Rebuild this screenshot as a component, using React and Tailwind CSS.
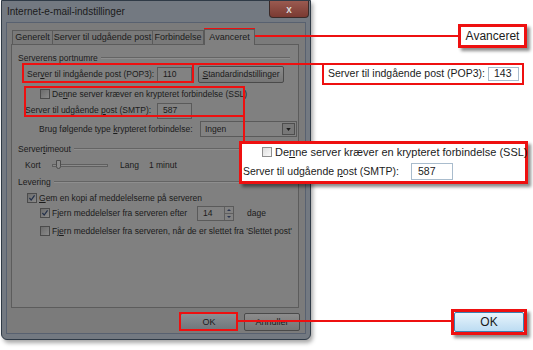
import React from 'react';

// dimmed dialog colours
const face = 'bg-[#7b7b7b]';

function Check({ checked, light }) {
  return (
    <span
      className={`relative inline-flex w-[10px] h-[10px] shrink-0 border ${
        light ? 'border-[#8f8f8f] bg-gradient-to-br from-[#dedede] to-[#fafafa]' : 'border-[#4b4b4b] bg-gradient-to-br from-[#6c6c6c] to-[#8a8a8a]'
      }`}
    >
      {checked && (
        <svg viewBox="0 0 10 10" className="absolute inset-0 w-full h-full">
          <path d="M1.8 5 L4 7.6 L8.2 1.8" fill="none" stroke="#23304a" strokeWidth="1.5" />
        </svg>
      )}
    </span>
  );
}

function Field({ value, className = '' }) {
  return (
    <div className={`flex items-center shrink-0 h-[16px] pl-[5px] border border-[#5a5a5a] bg-[#828282] ${className}`}>{value}</div>
  );
}

function GroupLabel({ children }) {
  return (
    <div className="flex items-center h-[14px] pl-[6px] pr-[8px] gap-[3px]">
      <span>{children}</span>
      <span className="flex-1 h-[2px] border-t border-[#646464] border-b border-b-[#8e8e8e]" />
    </div>
  );
}

export default function App() {
  return (
    <div className="relative w-[533px] h-[350px] overflow-hidden whitespace-nowrap bg-white font-['Liberation_Sans',Arial,sans-serif] text-[#1b1b1b]">
      {/* Dimmed dialog */}
      <div className="ml-[1px] w-[310px] h-[340px] flex flex-col bg-[#737981] border border-[#2f3a46] rounded-b-[6px] shadow-[2px_3px_4px_rgba(0,0,0,0.35)]">
        <div className="flex h-[21px] shrink-0">
          <span className="pl-[5px] pt-[5px] text-[10px] leading-[12px]">Internet-e-mail-indstillinger</span>
          <div className="ml-auto mr-[1px] w-[40px] h-[17px] flex items-center justify-center rounded-b-[4px] border border-t-0 border-[#3a2a28] bg-gradient-to-b from-[#9a5a50] to-[#7a3a32] text-[#d8d8d8] text-[10px] font-bold">
            x
          </div>
        </div>

        <div className={`mx-[4px] mb-[5px] flex-1 flex flex-col border border-[#586170] ${face} text-[8.5px] leading-[11px]`}>
          {/* Tabs */}
          <div className="flex items-end pl-[5px] pt-[5px] h-[21px] shrink-0 text-[9px]">
            <div className="w-[41px] h-[14px] flex items-center justify-center border border-b-0 border-[#5a5a5a] bg-[#797979]">Generelt</div>
            <div className="w-[100px] h-[14px] flex items-center justify-center border border-b-0 border-l-0 border-[#5a5a5a] bg-[#797979]">Server til udgående post</div>
            <div className="w-[51px] h-[14px] flex items-center justify-center border border-b-0 border-l-0 border-[#5a5a5a] bg-[#797979]">Forbindelse</div>
            <div className="w-[51px] h-[16px] flex items-center justify-center border border-b-0 border-[#5a5a5a] bg-[#808080] relative z-10 -mb-px">Avanceret</div>
          </div>

          {/* Panel */}
          <div className="ml-[4px] w-[288px] h-[264px] shrink-0 border border-[#5c5c5c] bg-[#808080] flex flex-col pt-[6px]">
            <GroupLabel>Serverens portnumre</GroupLabel>

            <div className="flex items-center h-[19px] pl-[15px]">
              <span className="w-[130px] shrink-0">Ser<u>v</u>er til indgående post (POP3):</span>
              <Field value="110" className="w-[35px]" />
              <div className="ml-[6px] w-[86px] h-[17px] shrink-0 flex items-center justify-center rounded-[2px] border border-[#4a4a4a] bg-gradient-to-b from-[#8c8c8c] to-[#767676]">
                <span><u>S</u>tandardindstillinger</span>
              </div>
            </div>

            <div className="flex items-center h-[16px] pl-[28px] gap-[2px] mt-[2px]">
              <Check />
              <span>De<u>n</u>ne server kræver en krypteret forbindelse (SSL)</span>
            </div>

            <div className="flex items-center h-[17px] pl-[13px]">
              <span className="w-[132px] shrink-0">Server til udgående <u>p</u>ost (SMTP):</span>
              <Field value="587" className="w-[35px]" />
            </div>

            <div className="flex items-center h-[18px] pl-[27px] mt-[1px]">
              <span className="w-[161px] shrink-0">Brug følgende type <u>k</u>rypteret forbindelse:</span>
              <div className="w-[97px] h-[16px] shrink-0 flex items-center border border-[#5a5a5a] bg-[#828282] pl-[4px]">
                <span className="flex-1">Ingen</span>
                <span className="w-[13px] h-[12px] mr-[1px] flex items-center justify-center border border-[#4e4e4e] bg-[#787878]">
                  <svg viewBox="0 0 6 4" className="w-[5px] h-[3px]"><path d="M0 0 H6 L3 4 Z" fill="#1b1b1b" /></svg>
                </span>
              </div>
            </div>

            <div className="mt-[4px]">
              <GroupLabel>
                Server<u>t</u>imeout
              </GroupLabel>
            </div>

            <div className="flex items-center h-[14px] pl-[13px] mt-[2px]">
              <span className="w-[27px] shrink-0">Kort</span>
              <div className="relative w-[56px] h-[10px] shrink-0 flex items-center">
                <span className="w-full h-[3px] border border-[#5f5f5f] bg-[#8a8a8a]" />
                <span className="absolute left-[4px] top-0 w-[5px] h-[9px] border border-[#4c4c4c] bg-[#8a8a8a] rounded-b-[3px]" />
              </div>
              <span className="ml-[12px]">Lang</span>
              <span className="ml-[10px]">1 minut</span>
            </div>

            <div className="mt-[3px]">
              <GroupLabel>Levering</GroupLabel>
            </div>

            <div className="flex items-center h-[14px] pl-[15px] gap-[2px] mt-[2px]">
              <Check checked />
              <span><u>G</u>em en kopi af meddelelserne på serveren</span>
            </div>

            <div className="flex items-center h-[16px] pl-[28px]">
              <Check checked />
              <span className="ml-[2px] w-[145px] shrink-0">F<u>j</u>ern meddelelser fra serveren efter</span>
              <div className="w-[37px] h-[15px] shrink-0 flex items-center border border-[#5a5a5a] bg-[#828282] pl-[5px]">
                <span className="flex-1">14</span>
                <span className="w-[9px] h-full flex flex-col border-l border-[#5f5f5f]">
                  <span className="flex-1 flex items-center justify-center border-b border-[#5f5f5f]">
                    <svg viewBox="0 0 6 3" className="w-[4px] h-[2px]"><path d="M0 3 H6 L3 0 Z" fill="#2b3550" /></svg>
                  </span>
                  <span className="flex-1 flex items-center justify-center">
                    <svg viewBox="0 0 6 3" className="w-[4px] h-[2px]"><path d="M0 0 H6 L3 3 Z" fill="#2b3550" /></svg>
                  </span>
                </span>
              </div>
              <span className="ml-[13px]">dage</span>
            </div>

            <div className="flex items-center h-[14px] pl-[28px] gap-[2px] mt-[3px]">
              <Check />
              <span>Fj<u>e</u>rn meddelelser fra serveren, når de er slettet fra 'Slettet post'</span>
            </div>
          </div>

          {/* Buttons */}
          <div className="flex justify-end gap-[6px] pr-[5px] mt-[5px] text-[9px]">
            <div className="w-[58px] h-[18px] flex items-center justify-center rounded-[2px] border border-[#2c4656] bg-gradient-to-b from-[#8a8f93] to-[#70767b]">OK</div>
            <div className="w-[56px] h-[18px] flex items-center justify-center rounded-[2px] border border-[#4a4a4a] bg-gradient-to-b from-[#8c8c8c] to-[#767676]">Annuller</div>
          </div>
        </div>
      </div>

      {/* Callout: Avanceret */}
      <div className="absolute left-[204px] top-[28px] w-[51px] h-[16px] border-2 border-[#ee1010]" />
      <div className="absolute left-[255px] top-[35px] w-[203px] h-[2px] bg-[#ee1010]" />
      <div className="absolute left-[458px] top-[24px] w-[69px] h-[24px] flex items-center justify-center border-[3px] border-[#ee1010] bg-white text-[12px] shadow-[3px_3px_3px_rgba(0,0,0,0.45)]">
        Avanceret
      </div>

      {/* Callout: POP3 */}
      <div className="absolute left-[22px] top-[63px] w-[172px] h-[20px] border-2 border-[#ee1010]" />
      <div className="absolute left-[194px] top-[63px] w-[174px] h-[2px] bg-[#ee1010]" />
      <div className="absolute left-[322px] top-[63px] w-[202px] h-[22px] flex items-center pl-[4px] gap-[3px] border-2 border-[#ee1010] bg-white text-[10.5px]">
        <span className="shrink-0">Server til indgående post (POP3):</span>
        <span className="w-[31px] h-[14px] shrink-0 flex items-center pl-[5px] border border-[#a9bccd]">143</span>
      </div>

      {/* Callout: SSL / SMTP */}
      <div className="absolute left-[24px] top-[86px] w-[221px] h-[31px] border-2 border-[#ee1010]" />
      <div className="absolute left-[243px] top-[116px] w-[2px] h-[26px] bg-[#ee1010]" />
      <div className="absolute left-[239px] top-[141px] w-[289px] h-[43px] flex flex-col justify-center gap-[4px] pl-[1px] border-[3px] border-[#ee1010] bg-white text-[10.5px] shadow-[3px_3px_3px_rgba(0,0,0,0.45)]">
        <div className="flex items-center gap-[3px] pl-[19px] h-[14px] text-[11px]">
          <Check light />
          <span>
            De<u>n</u>ne server kræver en krypteret forbindelse (SSL)
          </span>
        </div>
        <div className="flex items-center h-[17px]">
          <span className="w-[168px] shrink-0">
            Server til udgående <u>p</u>ost (SMTP):
          </span>
          <span className="w-[42px] h-[17px] shrink-0 flex items-center pl-[6px] border border-[#a9bccd]">587</span>
        </div>
      </div>

      {/* Callout: OK */}
      <div className="absolute left-[179px] top-[312px] w-[59px] h-[19px] border-2 border-[#ee1010]" />
      <div className="absolute left-[238px] top-[320px] w-[213px] h-[2px] bg-[#ee1010]" />
      <div className="absolute left-[451px] top-[309px] w-[76px] h-[26px] flex border-[3px] border-[#ee1010] bg-white shadow-[3px_3px_3px_rgba(0,0,0,0.45)]">
        <div className="flex-1 flex items-center justify-center rounded-[2px] border border-[#3c7fb1] bg-gradient-to-b from-[#e8f4fc] to-[#bcdcf2] text-[12px]">
          OK
        </div>
      </div>
    </div>
  );
}
